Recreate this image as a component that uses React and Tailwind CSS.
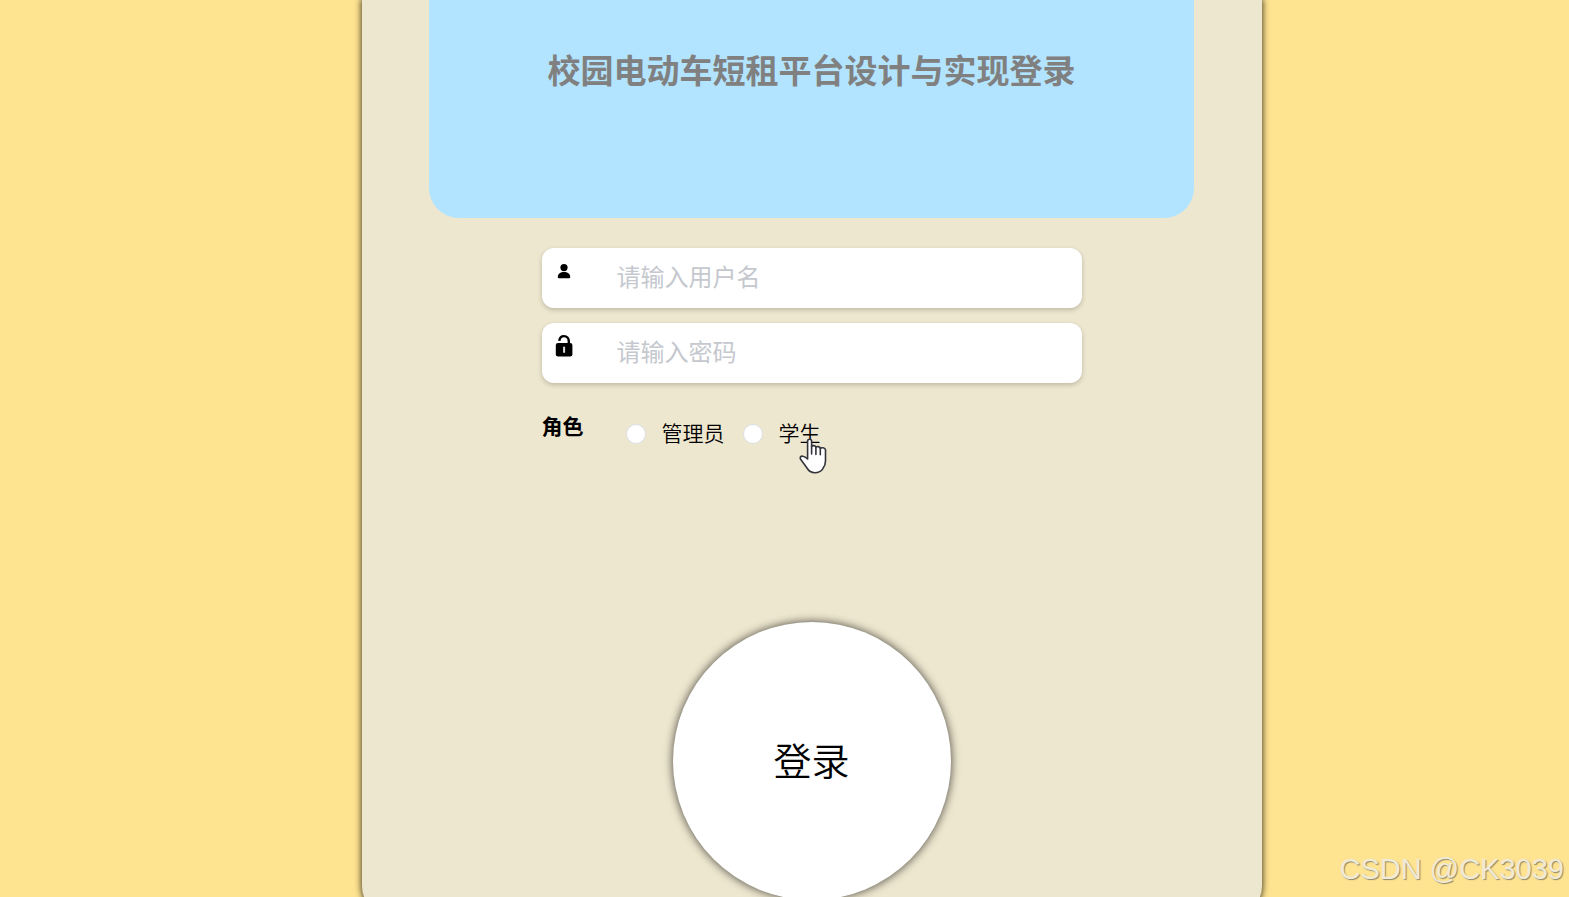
import React from "react";

function UserIcon() {
  return (
    <svg viewBox="0 0 24 24" className="size-6" fill="#000" aria-hidden="true">
      <circle cx="12" cy="8.600" r="3.600" />
      <path d="M5.800 18c0-3.100 2.700-4.900 6.200-4.900s6.200 1.800 6.200 4.900c0 .9-.5 1.300-1.300 1.300H7.100c-.8 0-1.300-.4-1.300-1.300z" />
    </svg>
  );
}

function LockIcon() {
  return (
    <svg viewBox="0 0 24 24" className="size-6" fill="none" aria-hidden="true">
      <path d="M7.300 6.800C7.600 3.900 9.400 2.100 12 2.100c2.900 0 4.800 2 4.800 4.900V9.600" stroke="#000" strokeWidth="2.400" />
      <rect x="3.800" y="8.900" width="16.600" height="13.500" rx="2.200" fill="#000" />
      <path d="M12.100 13.400v4.500" stroke="#ddd" strokeWidth="2" strokeLinecap="round" />
    </svg>
  );
}

function Field({ id, type, label, icon }) {
  return (
    <div className="flex h-[60px] rounded-xl bg-white shadow-[0_2px_5px_rgba(0,0,0,0.2)]">
      <label htmlFor={id} aria-label={label} className="w-[75px] shrink-0 pt-[11px] pl-[10px]">
        {icon}
      </label>
      <input
        id={id}
        type={type}
        placeholder={label}
        className="min-w-0 flex-1 rounded-xl bg-transparent pb-1 text-[24px] text-[#333] outline-none placeholder:text-[#c5c8ce]"
      />
    </div>
  );
}

function Role({ id, label }) {
  return (
    <div className="flex items-center gap-4">
      <input
        id={id}
        type="radio"
        name="role"
        className="size-5 shrink-0 appearance-none rounded-full border border-[#dcdfe6] bg-white checked:border-[6px] checked:border-[#409eff]"
      />
      <label htmlFor={id} className="cursor-pointer pb-1 text-[21px] leading-6 font-[350] text-black">
        {label}
      </label>
    </div>
  );
}

function HandCursor() {
  return (
    <svg
      viewBox="0 0 28 36"
      className="pointer-events-none absolute top-[18px] left-[56px] h-9 w-7"
      fill="#fff"
      stroke="#33333c"
      strokeWidth="1.600"
      strokeLinejoin="round"
      strokeLinecap="round"
      aria-hidden="true"
    >
      <path d="M8.600 21V3.300c0-2.700 4-2.700 4 0v5.300c.6-1.500 3.900-1.300 4.300.8.800-1.300 4-1.100 4.400 1 .9-1.100 4.900-1 5.200 1.400v11.200c0 3.200-.9 5.300-2.600 7.600-1.700 2.700-4.900 4.100-8 4.100-3.900 0-6.200-1.700-7.900-4.700L1.600 21.300c-1-2 .3-3.600 2.300-3.100 1.900.4 3.300 1.500 4.700 2.800z" />
      <path d="M12.600 8.600v7.400M16.900 9.400v7M21.300 10.400v6.400" fill="none" />
    </svg>
  );
}

export default function App() {
  return (
    <div className="relative h-screen overflow-hidden bg-[#fee390] pl-[54px] font-['Noto_Sans_CJK_SC',sans-serif]">
      <main className="mx-auto w-full max-w-[900px] rounded-b-[30px] bg-[#eee7cf] pb-4 shadow-[0_0_6px_1px_#000000b0]">
        <header className="mx-auto flex h-[218px] w-[85%] justify-center rounded-b-[30px] bg-[#b3e4ff] pt-[45px]">
          <h1 className="text-[33px] leading-[48px] font-bold whitespace-nowrap text-[#808080]">
            校园电动车短租平台设计与实现登录
          </h1>
        </header>
        <form className="mx-auto flex w-[60%] flex-col pt-[30px]" onSubmit={(e) => e.preventDefault()}>
          <div className="flex flex-col gap-[15px]">
            <Field id="username" type="text" label="请输入用户名" icon={<UserIcon />} />
            <Field id="password" type="password" label="请输入密码" icon={<LockIcon />} />
          </div>
          <fieldset className="mt-7 flex h-[60px] items-start" aria-labelledby="role-title">
            <span id="role-title" className="w-[84px] text-[21px] leading-7 font-bold text-black">
              角色
            </span>
            <div className="flex gap-[18px] pt-[9px]">
              <Role id="role-admin" label="管理员" />
              <div className="relative">
                <Role id="role-student" label="学生" />
                <HandCursor />
              </div>
            </div>
          </fieldset>
          <button
            type="submit"
            className="mt-[151px] size-[278px] cursor-pointer self-center rounded-full bg-white pb-1.5 text-[38px] font-[350] text-black shadow-[0_0_8px_1px_#00000099]"
          >
            登录
          </button>
        </form>
      </main>
      <div className="absolute right-[5px] bottom-2 font-['Liberation_Sans',sans-serif] text-[29px] leading-10 text-[#f0ead8] [text-shadow:1px_1px_1px_#8f8768]">
        CSDN @CK3039
      </div>
    </div>
  );
}
